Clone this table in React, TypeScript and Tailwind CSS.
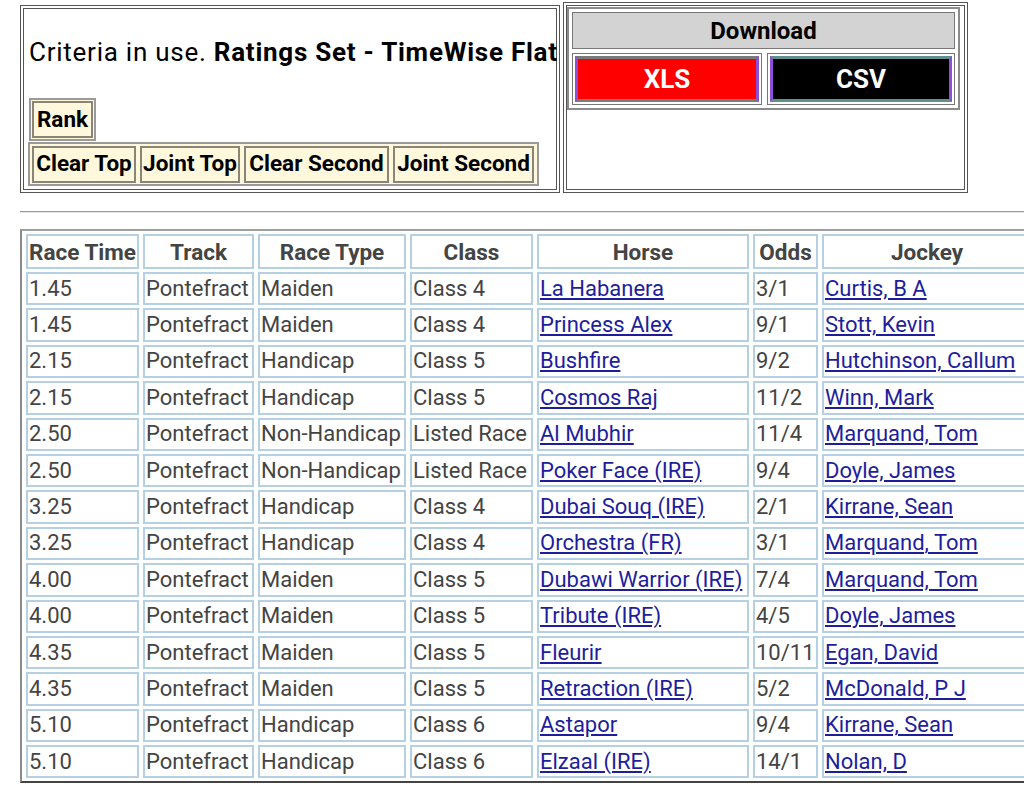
import React from "react";

type Row = {
  time: string;
  type: string;
  cls: string;
  horse: string;
  odds: string;
  jockey: string;
};

const rows: Row[] = [
  { time: "1.45", type: "Maiden", cls: "Class 4", horse: "La Habanera", odds: "3/1", jockey: "Curtis, B A" },
  { time: "1.45", type: "Maiden", cls: "Class 4", horse: "Princess Alex", odds: "9/1", jockey: "Stott, Kevin" },
  { time: "2.15", type: "Handicap", cls: "Class 5", horse: "Bushfire", odds: "9/2", jockey: "Hutchinson, Callum" },
  { time: "2.15", type: "Handicap", cls: "Class 5", horse: "Cosmos Raj", odds: "11/2", jockey: "Winn, Mark" },
  { time: "2.50", type: "Non-Handicap", cls: "Listed Race", horse: "Al Mubhir", odds: "11/4", jockey: "Marquand, Tom" },
  { time: "2.50", type: "Non-Handicap", cls: "Listed Race", horse: "Poker Face (IRE)", odds: "9/4", jockey: "Doyle, James" },
  { time: "3.25", type: "Handicap", cls: "Class 4", horse: "Dubai Souq (IRE)", odds: "2/1", jockey: "Kirrane, Sean" },
  { time: "3.25", type: "Handicap", cls: "Class 4", horse: "Orchestra (FR)", odds: "3/1", jockey: "Marquand, Tom" },
  { time: "4.00", type: "Maiden", cls: "Class 5", horse: "Dubawi Warrior (IRE)", odds: "7/4", jockey: "Marquand, Tom" },
  { time: "4.00", type: "Maiden", cls: "Class 5", horse: "Tribute (IRE)", odds: "4/5", jockey: "Doyle, James" },
  { time: "4.35", type: "Maiden", cls: "Class 5", horse: "Fleurir", odds: "10/11", jockey: "Egan, David" },
  { time: "4.35", type: "Maiden", cls: "Class 5", horse: "Retraction (IRE)", odds: "5/2", jockey: "McDonald, P J" },
  { time: "5.10", type: "Handicap", cls: "Class 6", horse: "Astapor", odds: "9/4", jockey: "Kirrane, Sean" },
  { time: "5.10", type: "Handicap", cls: "Class 6", horse: "Elzaal (IRE)", odds: "14/1", jockey: "Nolan, D" },
];

const cell =
  "border-2 border-[#b5d0e2] h-[33.4px] px-[1px] py-0 align-middle whitespace-nowrap overflow-hidden";
const link = "text-[#1e1e9c] underline underline-offset-2";

const SortButton = ({ label, width }: { label: string; width: string }) => (
  <div
    className={`${width} h-[37px] border-2 border-[#8a8576] bg-[#fff8dc] flex items-center justify-center text-[22.5px] font-bold text-black whitespace-nowrap`}
  >
    {label}
  </div>
);

export default function App() {
  return (
    <div className="min-h-[800px] w-[1024px] overflow-hidden bg-white font-['Roboto',sans-serif] text-[#444]">
      <div className="flex items-end gap-[3px] pl-[20px] pt-[2px]">
        <div className="w-[540px] h-[188px] border-[4px] border-double border-[#555] flex flex-col pl-[5px] pt-[29px]">
          <div className="text-[26px] leading-[28px] tracking-[0.75px] text-black whitespace-nowrap">
            Criteria in use. <span className="font-bold">Ratings Set - TimeWise Flat</span>
          </div>
          <div className="mt-[32px] w-[67px] h-[43px] border-2 border-[#9a9a9a] bg-[#fff8dc] flex items-center pl-[1px]">
            <SortButton label="Rank" width="w-[61px]" />
          </div>
          <div className="mt-[1px] -ml-[1px] w-[511px] h-[44px] border-2 border-[#9a9a9a] bg-[#fff8dc] flex items-center gap-[4px] pl-[2px]">
            <SortButton label="Clear Top" width="w-[104px]" />
            <SortButton label="Joint Top" width="w-[100px]" />
            <SortButton label="Clear Second" width="w-[145px]" />
            <SortButton label="Joint Second" width="w-[141px]" />
          </div>
        </div>

        <div className="w-[405px] h-[191px] border-[4px] border-double border-[#555] pt-[1px]">
          <div className="w-[393px] border-2 border-[#8a8a8a] p-[3px] flex flex-col gap-[4px]">
            <div className="h-[37px] bg-[#d3d3d3] border border-[#777] flex items-center justify-center text-[24px] font-bold text-black">
              Download
            </div>
            <div className="flex gap-[5px]">
              <div className="w-[190px] h-[52px] border border-[#777] p-[2px]">
                <div className="h-full bg-[#ff0000] border-[3px] border-y-[#7a7a7a] border-x-[#8e4fd6] flex items-center justify-center text-[26px] font-bold text-white">
                  XLS
                </div>
              </div>
              <div className="flex-1 h-[52px] border border-[#777] p-[2px]">
                <div className="h-full bg-black border-[3px] border-y-[#5f8f90] border-x-[#8e4fd6] flex items-center justify-center text-[26px] font-bold text-white">
                  CSV
                </div>
              </div>
            </div>
          </div>
        </div>
      </div>

      <div className="ml-[20px] mt-[18px] h-[2px] border-t border-t-[#9a9a9a] border-b border-b-[#e6e6e6]" />

      <div className="ml-[20px] mt-[16px]">
        <table className="border-separate border-spacing-x-[4px] border-spacing-y-[3px] border-2 border-t-[#a0a0a0] border-l-[#8a8a8a] border-b-[#444] border-r-[#444] text-[22px] leading-[26px] table-fixed w-[1010px]">
          <colgroup>
            <col className="w-[113px]" />
            <col className="w-[111px]" />
            <col className="w-[148px]" />
            <col className="w-[123px]" />
            <col className="w-[212px]" />
            <col className="w-[65px]" />
            <col className="w-[210px]" />
          </colgroup>
          <thead>
            <tr>
              {["Race Time", "Track", "Race Type", "Class", "Horse", "Odds", "Jockey"].map((h) => (
                <th key={h} className={`${cell} text-center font-bold text-[22.5px] h-[35px]`}>
                  {h}
                </th>
              ))}
            </tr>
          </thead>
          <tbody>
            {rows.map((r, i) => (
              <tr key={i}>
                <td className={cell}>{r.time}</td>
                <td className={cell}>Pontefract</td>
                <td className={cell}>{r.type}</td>
                <td className={cell}>{r.cls}</td>
                <td className={cell}>
                  <a href="#" className={link}>{r.horse}</a>
                </td>
                <td className={cell}>{r.odds}</td>
                <td className={cell}>
                  <a href="#" className={link}>{r.jockey}</a>
                </td>
              </tr>
            ))}
          </tbody>
        </table>
      </div>
    </div>
  );
}
